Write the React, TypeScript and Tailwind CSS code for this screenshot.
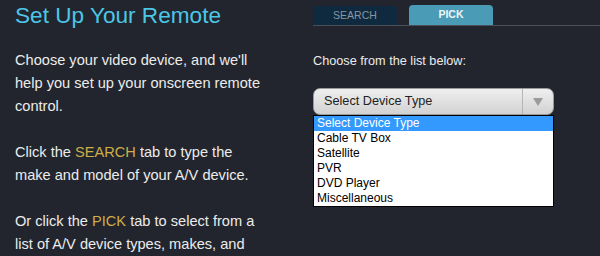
import React from "react";

const items = ["Select Device Type", "Cable TV Box", "Satellite", "PVR", "DVD Player", "Miscellaneous"];

export default function App() {
  return (
    <div className="w-[600px] h-[256px] overflow-hidden bg-[#22252d] flex" style={{ fontFamily: '"Liberation Sans", Arial, sans-serif' }}>
      <div className="w-[298px] shrink-0 pl-[15px]">
        <h1 className="text-[22.6px] leading-[28px] text-[#4cc6e6] mt-[2px]">Set Up Your Remote</h1>
        <div className="w-[250px] mt-[19px] text-[14.6px] leading-[23px] text-[#ececec]">
          <p>Choose your video device, and we'll help you set up your onscreen remote control.</p>
          <p className="mt-[23px]">
            Click the <span className="text-[#cfae48]">SEARCH</span> tab to type the make and model of your A/V device.
          </p>
          <p className="mt-[23px]">
            Or click the <span className="text-[#cfae48]">PICK</span> tab to select from a list of A/V device types, makes, and models.
          </p>
        </div>
      </div>
      <div className="flex-1 pl-[15px]">
        <div className="flex items-end gap-[12px] mt-[5px] border-b border-[#4a4f58]">
          <div className="w-[84px] h-[19px] bg-[#0f2a3f] rounded-t-[3px] flex items-center justify-center text-[10.5px] text-[#8a96a0]">SEARCH</div>
          <div className="w-[84px] h-[20px] bg-[#4a9bb6] rounded-t-[4px] flex items-center justify-center text-[10.5px] font-bold text-[#eef6f8]">PICK</div>
        </div>
        <div className="mt-[27px] text-[12.7px] leading-[16px] text-[#ececec]">Choose from the list below:</div>
        <div className="mt-[19px] w-[241px]">
          <div className="h-[27px] rounded-[7px] bg-gradient-to-b from-[#efefef] to-[#d2d2d2] border border-[#9a9a9a] flex items-center">
            <div className="flex-1 pl-[10px] text-[12.7px] text-[#222]">Select Device Type</div>
            <div className="w-[1px] self-stretch bg-[#b5b5b5]" />
            <div className="w-[30px] flex items-center justify-center">
              <svg width="10" height="8" viewBox="0 0 10 8"><path d="M0 0 L10 0 L5 8 Z" fill="#9b9b9b" /></svg>
            </div>
          </div>
          <div className="bg-white border border-black text-[12px] leading-[15px] text-black">
            {items.map((t, i) => (
              <div key={t} className={i === 0 ? "bg-[#3399ff] text-white pl-[3px]" : "pl-[3px]"}>{t}</div>
            ))}
          </div>
        </div>
      </div>
    </div>
  );
}
